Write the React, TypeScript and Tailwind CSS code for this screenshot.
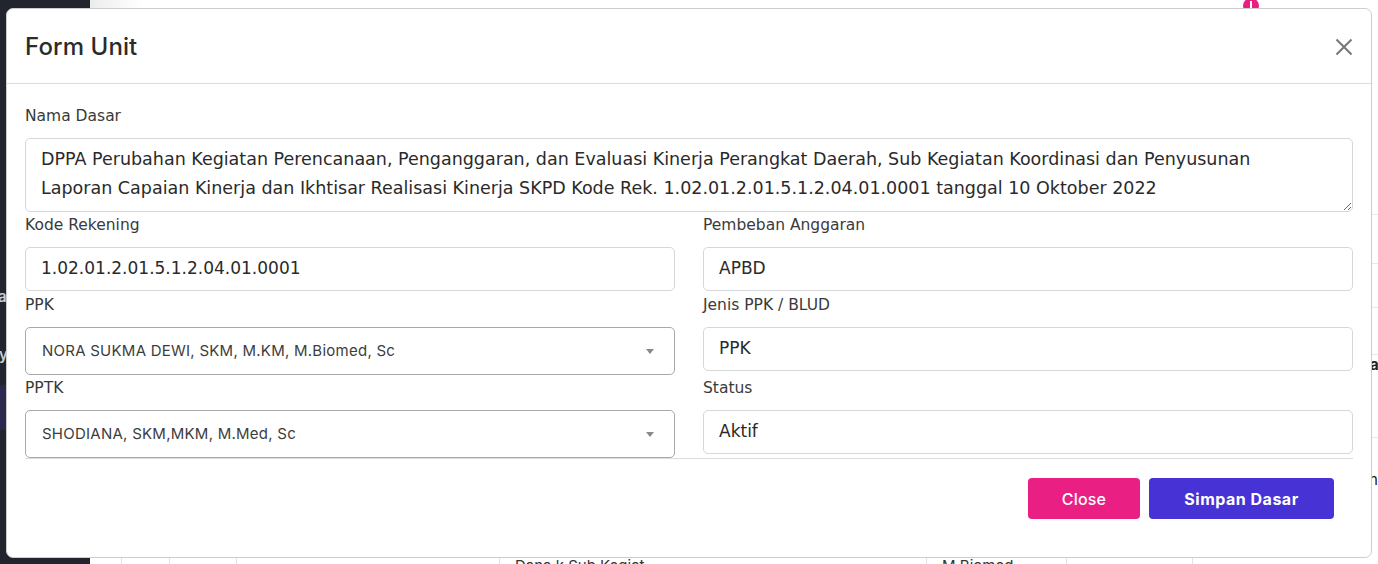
import React from "react";

const font = { fontFamily: '"Inter", "Noto Sans", sans-serif' };
const wide = { fontFamily: '"DejaVu Sans", "Inter", sans-serif' };

function Label({ children }: { children: React.ReactNode }) {
  return (
    <div className="h-[24px] mb-[11px] text-[15.5px] leading-[26px] text-[#3a3a3a]" style={wide}>
      {children}
    </div>
  );
}

function TextInput({ value }: { value: string }) {
  return (
    <div className="h-[44px] rounded-[5px] border border-[#d5d7db] bg-white pl-[15px] flex items-center text-[17px] text-[#2a2a2a]" style={wide}>
      {value}
    </div>
  );
}

function SelectBox({ value }: { value: string }) {
  return (
    <div className="h-[48px] rounded-[5px] border border-[#a9a9a9] bg-white pl-[16px] pr-[20px] flex items-center justify-between text-[15px] text-[#3d3d3d] tracking-[0.25px]">
      <span>{value}</span>
      <svg width="8" height="5" viewBox="0 0 8 5">
        <path d="M0 0 L8 0 L4 5 Z" fill="#8a8a8a" />
      </svg>
    </div>
  );
}

export default function App() {
  return (
    <div className="relative w-[1378px] h-[564px] overflow-hidden bg-white" style={font}>
      {/* background page */}
      <div className="flex h-full">
        <div className="w-[90px] h-full bg-[#22252d] flex flex-col">
          <div className="h-[287px]" />
          <div className="text-[#c9cbd0] text-[15px] font-semibold -ml-[2px] h-[20px] leading-[20px]">a</div>
          <div className="h-[38px]" />
          <div className="text-[#c9cbd0] text-[15px] font-semibold -ml-[1px] h-[20px] leading-[20px]">y</div>
          <div className="h-[20px]" />
          <div className="h-[45px] bg-[#2b2a4c]" />
        </div>
        <div className="flex-1 h-full flex flex-col bg-white">
          <div className="h-[8px] bg-gradient-to-r from-[#ececec] to-white to-[4%]" />
          <div className="flex-1" />
          <div className="h-[8px] flex text-[15px] text-[#333] leading-[20px] overflow-hidden">
            <div className="w-[32px] border-r border-[#e3e3e3]" />
            <div className="w-[48px] border-r border-[#e3e3e3]" />
            <div className="w-[67px] border-r border-[#e3e3e3]" />
            <div className="w-[263px] border-r border-[#e3e3e3]" />
            <div className="w-[427px] border-r border-[#e3e3e3] pl-[15px] whitespace-nowrap overflow-hidden">Dana k Sub Kegiat</div>
            <div className="w-[140px] border-r border-[#e3e3e3] pl-[15px] whitespace-nowrap overflow-hidden">M.Biomed</div>
            <div className="w-[126px] border-r border-[#e3e3e3]" />
          </div>
        </div>
      </div>
      {/* right edge content */}
      <div className="absolute right-0 top-[214px] w-[6px] h-[330px] flex flex-col">
        <div className="h-[1px] bg-[#e6e8f0]" />
        <div className="h-[48px]" />
        <div className="h-[1px] bg-[#e6e8f0]" />
        <div className="h-[43px]" />
        <div className="h-[1px] bg-[#e6e8f0]" />
        <div className="h-[46px]" />
        <div className="h-[1px] bg-[#e6e8f0]" />
        <div className="h-[20px] text-[15px] font-bold text-[#222] leading-[20px] -ml-[2px]">a</div>
        <div className="h-[62px]" />
        <div className="h-[1px] bg-[#e6e8f0]" />
        <div className="h-[32px]" />
        <div className="h-[20px] text-[15px] text-[#222] leading-[20px] -ml-[3px]">n</div>
      </div>
      {/* notification badge */}
      <div className="absolute left-[1243px] top-[-2px] w-[16px] h-[16px] rounded-full bg-[#e91e84] flex items-start justify-center">
        <div className="w-[2px] h-[7px] mt-[3px] bg-white" />
      </div>

      {/* modal */}
      <div className="absolute left-[6px] top-[8px] w-[1366px] h-[550px] bg-white border border-[#cdcdcd] rounded-[7px] flex flex-col">
        <div className="h-[75px] shrink-0 border-b border-[#dcdcdc] flex items-center justify-between pl-[18px] pr-[18px]">
          <div className="text-[24px] font-medium text-[#2b2b2b] tracking-[0.1px] mt-[1px]">Form Unit</div>
          <svg width="18" height="18" viewBox="0 0 18 18" className="mt-[1px]">
            <path d="M1.5 1.5 L16.5 16.5 M16.5 1.5 L1.5 16.5" stroke="#777" strokeWidth="2" strokeLinecap="butt" />
          </svg>
        </div>
        <div className="px-[18px] pt-[19px] flex flex-col">
          <Label>Nama Dasar</Label>
          <textarea
            className="h-[74px] w-full rounded-[5px] border border-[#d5d7db] pl-[15px] pr-[15px] pt-[6px] text-[17.5px] leading-[29px] text-[#2a2a2a] outline-none overflow-hidden"
            style={wide}
            defaultValue={"DPPA Perubahan Kegiatan Perencanaan, Penganggaran, dan Evaluasi Kinerja Perangkat Daerah, Sub Kegiatan Koordinasi dan Penyusunan\nLaporan Capaian Kinerja dan Ikhtisar Realisasi Kinerja SKPD Kode Rek. 1.02.01.2.01.5.1.2.04.01.0001 tanggal 10 Oktober 2022"}
          />
          <div className="grid grid-cols-2 gap-x-[28px] border-b border-[#dcdcdc]">
            <div>
              <Label>Kode Rekening</Label>
              <TextInput value="1.02.01.2.01.5.1.2.04.01.0001" />
            </div>
            <div>
              <Label>Pembeban Anggaran</Label>
              <TextInput value="APBD" />
            </div>
            <div className="pt-[1px]">
              <Label>PPK</Label>
              <SelectBox value="NORA SUKMA DEWI, SKM, M.KM, M.Biomed, Sc" />
            </div>
            <div className="pt-[1px]">
              <Label>Jenis PPK / BLUD</Label>
              <TextInput value="PPK" />
            </div>
            <div>
              <Label>PPTK</Label>
              <SelectBox value="SHODIANA, SKM,MKM, M.Med, Sc" />
            </div>
            <div>
              <Label>Status</Label>
              <TextInput value="Aktif" />
            </div>
          </div>
          <div className="flex justify-end gap-[9px] pt-[19px] pr-[19px]">
            <button className="w-[112px] h-[41px] rounded-[4px] bg-[#e91f84] text-white text-[16px] font-medium tracking-[0.2px]">Close</button>
            <button className="w-[185px] h-[41px] rounded-[4px] bg-[#4732d5] text-white text-[16px] font-bold tracking-[0.5px]">Simpan Dasar</button>
          </div>
        </div>
      </div>
    </div>
  );
}
